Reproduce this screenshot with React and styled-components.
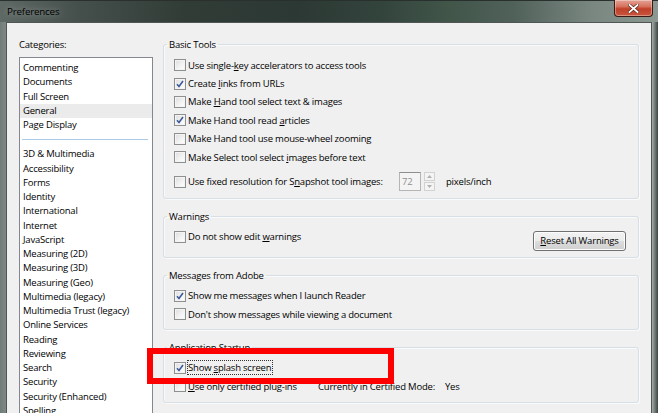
import React from "react";
import styled, { createGlobalStyle } from "styled-components";

const Global = createGlobalStyle`
  html, body { margin: 0; padding: 0; }
  body {
    width: 658px; height: 413px; overflow: hidden;
    font-family: "Open Sans", "Noto Sans", sans-serif;
    font-size: 9.5px; letter-spacing: -0.2px; color: #000;
  }
  * { box-sizing: border-box; }
`;

const Window = styled.div`
  position: relative;
  width: 658px;
  height: 413px;
  display: flex;
  flex-direction: column;
  overflow: hidden;
  background: #5c6763;
`;

const TitleBar = styled.div`
  height: 22px;
  flex: none;
  display: flex;
  align-items: flex-start;
  padding-left: 7px;
  background: linear-gradient(90deg, #5e6864 0%, #454f4b 12%, #313c37 28%, #2c3833 45%, #33443d 58%, #415549 68%, #50615a 78%, #7a8781 90%, #8b9791 100%);
  border-top: 1px solid #2a302e;
`;

const Title = styled.div`
  line-height: 21px;
  font-size: 9.8px;
  color: #000;
  text-shadow: 0 0 6px rgba(225,230,228,0.6);
`;

const CloseButton = styled.div`
  margin-left: auto;
  margin-right: 5px;
  margin-top: -1px;
  width: 39px;
  height: 17px;
  border: 1px solid #3b1a14;
  border-top: none;
  border-radius: 0 0 4px 4px;
  background: linear-gradient(180deg, #e4a295 0%, #d7735f 40%, #c0402a 55%, #c8553c 100%);
  box-shadow: inset 0 0 0 1px rgba(255,255,255,0.35);
  display: flex;
  align-items: center;
  justify-content: center;
`;

const Frame = styled.div`
  flex: 1;
  display: flex;
  padding: 0 6px;
  min-height: 0;
  background: linear-gradient(90deg, #717b77 0px, #7e8884 6px, #7e8884 calc(100% - 7px), #a3aca8 calc(100% - 6px), #3a4440 100%);
`;

const Body = styled.div`
  flex: 1;
  display: flex;
  background: #f0f0f0;
  border: 1px solid #4e5753;
  border-bottom: none;
  min-height: 0;
  overflow: hidden;
`;

const Sidebar = styled.div`
  width: 146px;
  flex: none;
  padding: 14px 0 0 12px;
  display: flex;
  flex-direction: column;
`;

const SideLabel = styled.div`
  line-height: 15px;
  margin-bottom: 5px;
`;

const List = styled.div`
  width: 134px;
  flex: 1;
  background: #fff;
  border: 1px solid #828790;
  border-bottom: none;
  padding-top: 3px;
  overflow: hidden;
`;

const Item = styled.div`
  line-height: 14.25px;
  height: 14.25px;
  padding-left: 3px;
  white-space: nowrap;
  background: ${p => (p.$selected ? "#ebebeb" : "transparent")};
`;

const Separator = styled.div`
  height: 15px;
  display: flex;
  align-items: center;
  padding: 0 4px 0 2px;
  &::after {
    content: "";
    flex: 1;
    height: 1px;
    background: #a9cbe8;
  }
`;

const Main = styled.div`
  flex: 1;
  min-width: 0;
  margin-left: 10px;
  padding: 14px 12px 0 0;
  display: flex;
  flex-direction: column;
`;

const Group = styled.fieldset`
  margin: 0;
  min-width: 0;
  border: 1px solid #d5dfe5;
  border-radius: 3px;
  padding: 4px 12px ${p => p.$pb || 7}px 10px;
  box-shadow: inset 1px 1px 0 #fafafa, 1px 1px 0 #fafafa;
  & + & { margin-top: ${p => p.$mt || 10}px; }
`;

const Legend = styled.legend`
  padding: 0 2px;
  margin-left: -7px;
  line-height: 15px;
`;

const Row = styled.div`
  display: flex;
  align-items: center;
  height: 18.4px;
  white-space: nowrap;
  margin-top: ${p => p.$mt || 0}px;
`;

const TopRow = styled.div`
  display: flex;
  align-items: flex-start;
  white-space: nowrap;
`;

const Field = styled.div`
  display: flex;
  align-items: center;
  width: ${p => (p.$w ? p.$w + "px" : "auto")};
  flex: none;
`;

const Box = styled.span`
  width: 12px;
  height: 12px;
  flex: none;
  margin-right: 2px;
  border: 1px solid #8e8f8f;
  background: linear-gradient(135deg, #dcdcdc 0%, #f4f4f4 60%, #ffffff 100%);
  box-shadow: inset 0 0 0 1px #f4f4f4;
  display: flex;
  align-items: center;
  justify-content: center;
`;

const U = styled.span`
  text-decoration: underline;
`;

const Focus = styled.span`
  outline: 1px dotted #333;
  outline-offset: 0px;
  padding: 0 1px 0 0;
  line-height: 13px;
`;

const Spin = styled.div`
  display: flex;
  align-items: center;
`;

const SpinInput = styled.div`
  width: 22px;
  height: 19px;
  border: 1px solid #b5b5b5;
  border-top-color: #8e8e8e;
  background: #f4f4f4;
  color: #8f8f8f;
  padding-left: 2px;
  line-height: 17px;
`;

const SpinButtons = styled.div`
  margin-left: 3px;
  width: 11px;
  height: 19px;
  display: flex;
  flex-direction: column;
  gap: 1px;
`;

const SpinBtn = styled.div`
  flex: 1;
  border: 1px solid #d2d2d2;
  background: #f4f4f4;
  display: flex;
  align-items: center;
  justify-content: center;
`;

const Unit = styled.span`
  margin-left: 11px;
`;

const Button = styled.div`
  margin-left: auto;
  margin-top: 3px;
  width: 93px;
  height: 20px;
  border: 1px solid #707070;
  border-radius: 3px;
  background: linear-gradient(180deg, #f2f2f2 0%, #ebebeb 50%, #dddddd 51%, #cfcfcf 100%);
  box-shadow: inset 0 0 0 1px #fcfcfc;
  display: flex;
  align-items: center;
  justify-content: center;
`;

const Value = styled.span`
  margin-left: ${p => p.$ml || 0}px;
`;

const Highlight = styled.div`
  position: absolute;
  left: 147px;
  top: 348px;
  width: 247px;
  height: 36px;
  border: 6px solid #ff0000;
  pointer-events: none;
`;

const Check = ({ checked }) => (
  <Box>
    {checked && (
      <svg width="8" height="8" viewBox="0 0 8 8">
        <path d="M1 4.2 L3 6.5 L7 1" fill="none" stroke="#3c5a9a" strokeWidth="1.6" />
      </svg>
    )}
  </Box>
);

const categories1 = ["Commenting", "Documents", "Full Screen", "General", "Page Display"];
const categories2 = [
  "3D & Multimedia", "Accessibility", "Forms", "Identity", "International", "Internet",
  "JavaScript", "Measuring (2D)", "Measuring (3D)", "Measuring (Geo)", "Multimedia (legacy)",
  "Multimedia Trust (legacy)", "Online Services", "Reading", "Reviewing", "Search", "Security",
  "Security (Enhanced)", "Spelling"
];

export default function App() {
  return (
    <>
      <Global />
      <Window>
        <TitleBar>
          <Title>Preferences</Title>
          <CloseButton>
            <svg width="11" height="9" viewBox="0 0 11 9">
              <path d="M1.5 1 L9.5 8 M9.5 1 L1.5 8" stroke="#5a2418" strokeWidth="3.2" strokeLinecap="square" />
              <path d="M1.5 1 L9.5 8 M9.5 1 L1.5 8" stroke="#ffffff" strokeWidth="1.8" strokeLinecap="square" />
            </svg>
          </CloseButton>
        </TitleBar>
        <Frame>
          <Body>
            <Sidebar>
              <SideLabel>Categories:</SideLabel>
              <List>
                {categories1.map(c => (
                  <Item key={c} $selected={c === "General"}>{c}</Item>
                ))}
                <Separator />
                {categories2.map(c => (
                  <Item key={c}>{c}</Item>
                ))}
              </List>
            </Sidebar>
            <Main>
              <Group>
                <Legend>Basic Tools</Legend>
                <Row><Check /><span>Use single-<U>k</U>ey accelerators to access tools</span></Row>
                <Row><Check checked /><span>Create <U>l</U>inks from URLs</span></Row>
                <Row><Check /><span>Make <U>H</U>and tool select text &amp; images</span></Row>
                <Row><Check checked /><span>Make Hand tool read <U>a</U>rticles</span></Row>
                <Row><Check /><span>Make Hand tool use mouse-wheel zooming</span></Row>
                <Row><Check /><span>Make Select tool select <U>i</U>mages before text</span></Row>
                <Row $mt={6}>
                  <Field $w={225}><Check /><span>Use fixed resolution for S<U>n</U>apshot tool images:</span></Field>
                  <Spin>
                    <SpinInput>72</SpinInput>
                    <SpinButtons>
                      <SpinBtn>
                        <svg width="5" height="3" viewBox="0 0 5 3"><path d="M0 3 L2.5 0 L5 3Z" fill="#b0b0b0" /></svg>
                      </SpinBtn>
                      <SpinBtn>
                        <svg width="5" height="3" viewBox="0 0 5 3"><path d="M0 0 L2.5 3 L5 0Z" fill="#b0b0b0" /></svg>
                      </SpinBtn>
                    </SpinButtons>
                  </Spin>
                  <Unit>pixels/inch</Unit>
                </Row>
              </Group>
              <Group $pb={6}>
                <Legend>Warnings</Legend>
                <TopRow>
                  <Row><Check /><span>Do not show edit <U>w</U>arnings</span></Row>
                  <Button><span><U>R</U>eset All Warnings</span></Button>
                </TopRow>
              </Group>
              <Group $pb={5}>
                <Legend>Messages from Adobe</Legend>
                <Row><Check checked /><span>Show me messages when I launch Reader</span></Row>
                <Row><Check /><span>Don't show messages while viewing a document</span></Row>
              </Group>
              <Group>
                <Legend>Application Startup</Legend>
                <Row><Check checked /><Focus>Show <U>s</U>plash screen</Focus></Row>
                <Row>
                  <Field $w={144}><Check /><span><U>U</U>se only certified plug-ins</span></Field>
                  <span>Currently in Certified Mode:</span>
                  <Value $ml={10}>Yes</Value>
                </Row>
              </Group>
            </Main>
          </Body>
        </Frame>
        <Highlight />
      </Window>
    </>
  );
}
